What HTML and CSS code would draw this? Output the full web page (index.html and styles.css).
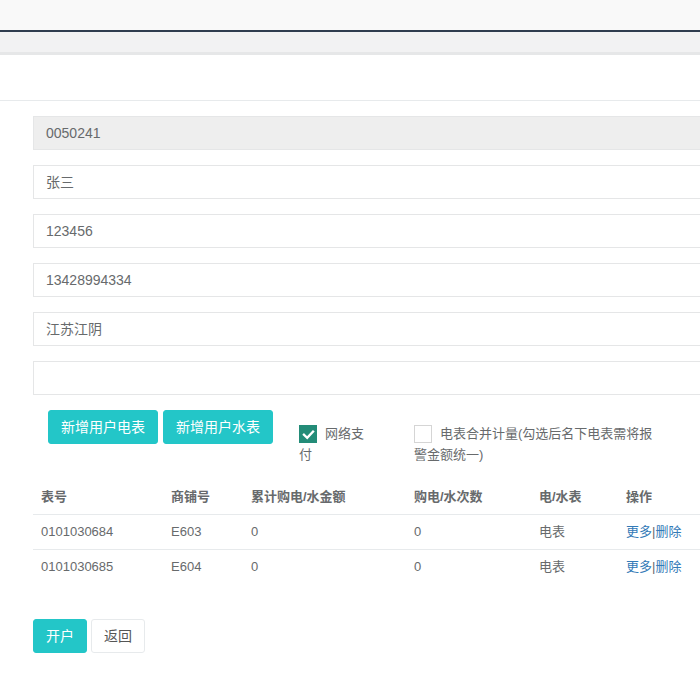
FILE: index.html
```html
<!DOCTYPE html>
<html lang="zh-CN">
<head>
<meta charset="utf-8">
<title>开户</title>
<link rel="stylesheet" href="styles.css">
</head>
<body>
<div class="topbar"></div>
<div class="subbar"></div>
<div class="titlebar"></div>
<div class="content">
  <form class="form">
    <div class="input readonly">0050241</div>
    <div class="input">张三</div>
    <div class="input">123456</div>
    <div class="input">13428994334</div>
    <div class="input">江苏江阴</div>
    <div class="input"></div>

    <div class="actions">
      <button type="button" class="btn btn-info">新增用户电表</button>
      <button type="button" class="btn btn-info">新增用户水表</button>
      <label class="check check-pay"><span class="box checked"><svg viewBox="0 0 17 17" width="17" height="17"><path d="M4 8.8 L7.2 11.8 L13 5.6" fill="none" stroke="#fff" stroke-width="2.4" stroke-linecap="square"/></svg></span>网络支付</label>
      <label class="check check-merge"><span class="box"></span>电表合并计量(勾选后名下电表需将报警金额统一)</label>
    </div>

    <table class="table">
      <colgroup>
        <col class="c1"><col class="c2"><col class="c3"><col class="c4"><col class="c5"><col class="c6">
      </colgroup>
      <thead>
        <tr><th>表号</th><th>商铺号</th><th>累计购电/水金额</th><th>购电/水次数</th><th>电/水表</th><th>操作</th></tr>
      </thead>
      <tbody>
        <tr><td>0101030684</td><td>E603</td><td>0</td><td>0</td><td>电表</td><td><a class="link">更多</a>|<a class="link">删除</a></td></tr>
        <tr><td>0101030685</td><td>E604</td><td>0</td><td>0</td><td>电表</td><td><a class="link">更多</a>|<a class="link">删除</a></td></tr>
      </tbody>
    </table>

    <div class="footer-actions">
      <button type="button" class="btn btn-info">开户</button>
      <button type="button" class="btn btn-white">返回</button>
    </div>
  </form>
</div>
</body>
</html>
```
FILE: styles.css
```css
html, body {
  margin: 0;
  padding: 0;
  background: #fff;
}
body {
  font-family: "Liberation Sans", Arial, "Noto Sans CJK SC", sans-serif;
  font-size: 13px;
  color: #676a6c;
  width: 700px;
}
.topbar {
  height: 30px;
  background: #f9f9f9;
  border-bottom: 2px solid #2f3d4f;
}
.subbar {
  height: 20px;
  background: #f2f2f3;
  border-bottom: 3px solid #e6e7e8;
}
.titlebar {
  height: 45px;
  border-bottom: 1px solid #e7eaec;
}
.content {
  box-sizing: border-box;
  padding: 15px 0 0 33px;
  width: 700px;
}
.form {
  display: flex;
  flex-direction: column;
  gap: 15px;
}
.input {
  box-sizing: border-box;
  height: 34px;
  border: 1px solid #e5e6e7;
  border-right: 0;
  padding: 0 12px;
  font-size: 14px;
  line-height: 32px;
  color: #676a6c;
  background: #fff;
}
.input.readonly {
  background: #eee;
}
.actions {
  display: flex;
  align-items: flex-start;
  padding-left: 15px;
  height: 55px;
}
.btn {
  box-sizing: border-box;
  height: 34px;
  padding: 0 12px;
  border: 1px solid transparent;
  border-radius: 3px;
  font-family: inherit;
  font-size: 14px;
  line-height: 32px;
  cursor: pointer;
}
.btn-info {
  background: #23c6c8;
  border-color: #23c6c8;
  color: #fff;
}
.btn-white {
  background: #fff;
  border-color: #e7eaec;
  color: #555;
}
.actions .btn + .btn {
  margin-left: 5px;
}
.check {
  display: block;
  flex: none;
  margin-top: 13px;
  line-height: 21px;
  font-size: 13px;
  color: #676a6c;
}
.check-pay {
  margin-left: 26px;
  width: 72px;
}
.check-merge {
  margin-left: 43px;
  width: 245px;
}
.box {
  display: inline-block;
  box-sizing: border-box;
  width: 18px;
  height: 18px;
  margin-top: 2px;
  margin-right: 8px;
  vertical-align: top;
  border: 1px solid #d5d5d5;
  background: #fff;
}
.box.checked {
  background: #238c78;
  border-color: #238c78;
}
.box svg {
  display: block;
  margin: 0;
}
.table {
  border-collapse: collapse;
  width: 667px;
  table-layout: fixed;
}
.c1 { width: 130px; }
.c2 { width: 80px; }
.c3 { width: 163px; }
.c4 { width: 125px; }
.c5 { width: 87px; }
.table th,
.table td {
  padding: 8px;
  text-align: left;
  line-height: 18px;
  font-size: 13px;
  white-space: nowrap;
}
.table th {
  font-weight: bold;
  border-bottom: 1px solid #e7eaec;
}
.table tbody tr + tr td {
  border-top: 1px solid #e7eaec;
}
.link {
  color: #337ab7;
  text-decoration: none;
}
.footer-actions {
  display: flex;
  gap: 4px;
  margin-top: 20px;
}
```
